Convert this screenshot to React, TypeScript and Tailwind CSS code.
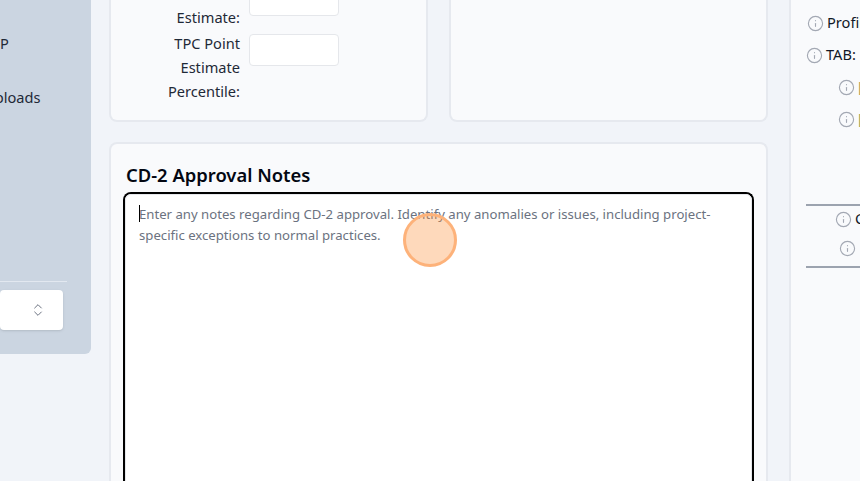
import { ChevronsUpDown, Info } from "lucide-react";

const Hint = () => <Info size={17} strokeWidth={1.6} className="shrink-0 text-[#a3a8b3]" />;

const Sidebar = () => (
  <aside className="w-[91px] shrink-0 h-[354px] bg-[#cbd5e1] rounded-br-md overflow-hidden flex flex-col">
    <div className="h-[282px] border-b border-[#e2e8f0] mr-[24px] shrink-0 text-[14.6px] text-[#1f2937]">
      <div className="pt-[31px] leading-6">P</div>
      <div className="pt-[30px] leading-6 -ml-[16px]">Uploads</div>
    </div>
    <div className="mt-[8px] mr-[28px] h-[40px] bg-white rounded-[4px] flex items-center justify-end pr-[17px] shadow-sm">
      <ChevronsUpDown size={16} strokeWidth={1.5} className="text-[#6b7280]" />
    </div>
  </aside>
);

const TopCards = () => (
  <div className="grid grid-cols-2 gap-[21px] h-[122px] shrink-0">
    <div className="h-full bg-[#f9fafc] border-2 border-t-0 border-[#e6e9ef] rounded-b-lg text-[14.6px] leading-6 text-[#1f2937]">
      <div className="grid grid-cols-[129px_90px] gap-x-[9px] content-start items-start -mt-[16px]">
        <div className="text-right pt-[21px]">Estimate:</div>
        <div className="h-[32px] bg-white border border-[#e5e7eb] rounded-[4px]" />
        <div className="text-right mt-[2px]">
          TPC Point
          <br />
          Estimate
          <br />
          Percentile:
        </div>
        <div className="h-[32px] mt-[5px] bg-white border border-[#e5e7eb] rounded-[4px]" />
      </div>
    </div>
    <div className="h-full bg-[#f9fafc] border-2 border-t-0 border-[#e6e9ef] rounded-b-lg" />
  </div>
);

const NotesCard = () => (
  <section className="mt-[20px] flex-1 min-h-0 bg-[#f9fafc] border-2 border-b-0 border-[#e6e9ef] rounded-t-lg px-[15px] pt-[17px]">
    <h2 className="text-[18.4px] leading-[28px] font-semibold text-[#030712] mb-[3px]">CD-2 Approval Notes</h2>
    <div className="h-[400px] border-2 border-black rounded-lg border-b-0 -mx-[3px]">
      <div className="h-full bg-white border border-[#e5e7eb] rounded-md px-[13px] pt-[9px] text-[13.16px] leading-[21px] text-[#6b7280] relative">
        <span className="absolute left-[13px] top-[10px] w-px h-[17px] bg-black" />
        Enter any notes regarding CD-2 approval. Identify any anomalies or issues, including project-
        <br />
        specific exceptions to normal practices.
      </div>
    </div>
  </section>
);

const RightPanel = () => (
  <aside className="flex-1 min-w-0 border-l-2 border-[#e6e9ef] bg-[#f9fafc] overflow-hidden text-[14.6px] text-[#111827] whitespace-nowrap pl-[15px] pt-[11px]">
    <div className="flex items-center gap-[3px] h-[24px] pl-[1px]">
      <Hint />
      <span>Profile</span>
    </div>
    <div className="flex items-center gap-[3px] h-[24px] mt-[8px]">
      <Hint />
      <span>TAB:</span>
    </div>
    <div className="flex items-center gap-[3px] h-[24px] mt-[8px] pl-[32px]">
      <Hint />
      <span className="text-[#b6a25c]">[</span>
    </div>
    <div className="flex items-center gap-[3px] h-[24px] mt-[8px] pl-[32px]">
      <Hint />
      <span className="text-[#9aa65c]">[</span>
    </div>
    <div className="mt-[73px] -mr-[4px] border-t-2 border-b-2 border-[#9ca3af] h-[64px] pt-[1px]">
      <div className="flex items-center gap-[3px] h-[24px] pl-[29px]">
        <Hint />
        <span>C</span>
      </div>
      <div className="flex items-center h-[24px] mt-[5px] pl-[33px]">
        <Hint />
      </div>
    </div>
  </aside>
);

const App = () => {
  return (
    <div className="relative flex w-[860px] h-[481px] overflow-hidden bg-[#f1f4f9] font-['Noto_Sans','Open_Sans',sans-serif]">
      <Sidebar />
      <main className="w-[659px] shrink-0 ml-[18px] flex flex-col h-full">
        <TopCards />
        <NotesCard />
      </main>
      <div className="w-[21px] shrink-0" />
      <RightPanel />
      {/* click marker from the recording */}
      <div className="absolute left-[403px] top-[213px] w-[54px] h-[54px] rounded-full bg-[#fb923c]/35 border-[3px] border-[#fdb27a]" />
    </div>
  );
};

export default App;
